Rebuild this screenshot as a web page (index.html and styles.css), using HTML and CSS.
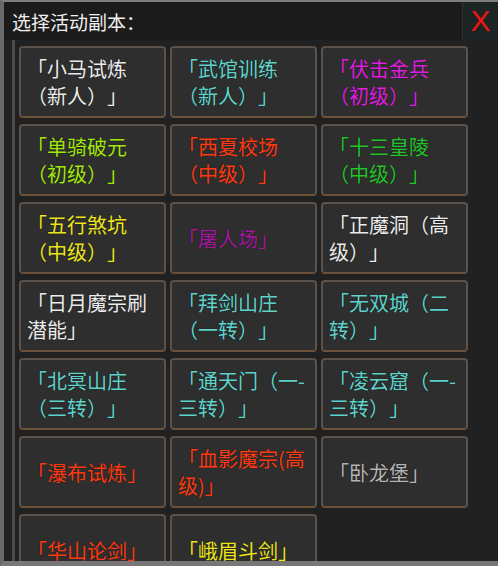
FILE: index.html
```html
<!DOCTYPE html>
<html lang="zh-CN">
<head>
    <meta charset="UTF-8">
    <title>选择活动副本</title>
    <link rel="stylesheet" href="styles.css">
</head>
<body>
    <div class="panel">
        <!-- Header -->
        <div class="panel-header">
            <span class="panel-title">选择活动副本：</span>
            <button class="close-btn">X</button>
        </div>

        <!-- Instance list -->
        <div class="instance-list">
            <div class="instance white">「小马试炼（新人）」</div>
            <div class="instance cyan">「武馆训练（新人）」</div>
            <div class="instance magenta">「伏击金兵（初级）」</div>

            <div class="instance lime">「单骑破元（初级）」</div>
            <div class="instance red">「西夏校场（中级）」</div>
            <div class="instance green">「十三皇陵（中级）」</div>

            <div class="instance yellow">「五行煞坑（中级）」</div>
            <div class="instance purple">「屠人场」</div>
            <div class="instance white">「正魔洞（高级）」</div>

            <div class="instance white">「日月魔宗刷潜能」</div>
            <div class="instance cyan">「拜剑山庄（一转）」</div>
            <div class="instance cyan">「无双城（二转）」</div>

            <div class="instance cyan">「北冥山庄（三转）」</div>
            <div class="instance cyan">「通天门（一-三转）」</div>
            <div class="instance cyan">「凌云窟（一-三转）」</div>

            <div class="instance red">「瀑布试炼」</div>
            <div class="instance red">「血影魔宗(高级)」</div>
            <div class="instance grey">「卧龙堡」</div>

            <div class="instance red">「华山论剑」</div>
            <div class="instance yellow">「峨眉斗剑」</div>
        </div>
    </div>
</body>
</html>
```

FILE: styles.css
```css
body {
    margin: 0;
    padding: 0;
    background-color: #1e1e1e;
    font-family: 'Noto Sans CJK SC', 'Noto Sans', sans-serif;
    text-spacing-trim: space-all;
}

.panel {
    width: 498px;
    height: 566px;
    box-sizing: border-box;
    background-color: #212121;
    border-top: 2px solid #7d7d7d;
    border-left: 4px solid #6a6a6a;
    border-bottom: 5px solid #777;
    display: flex;
    flex-direction: column;
    overflow: hidden;
}

.panel-header {
    height: 38px;
    flex-shrink: 0;
    display: flex;
    align-items: center;
    justify-content: space-between;
    background-color: #1b1b1b;
}

.panel-title {
    color: #f0f0f0;
    font-size: 19px;
    padding-left: 8px;
}

.close-btn {
    width: 36px;
    height: 40px;
    margin-top: -2px;
    align-self: flex-start;
    background-color: #1c2523;
    border: none;
    border-left: 1px solid #2c3230;
    color: #ee1414;
    font-family: 'Liberation Sans', Arial, sans-serif;
    font-size: 30px;
    padding: 2px 0 0;
    cursor: pointer;
}

.instance-list {
    flex: 1;
    margin-left: 8px;
    border-left: 3px solid #4a4a4a;
    padding: 6px 0 0 4px;
    display: grid;
    grid-template-columns: repeat(3, 147px);
    grid-auto-rows: 72px;
    column-gap: 4px;
    row-gap: 6px;
    overflow: hidden;
}

.instance {
    box-sizing: border-box;
    display: flex;
    align-items: center;
    padding: 0 6px;
    background-color: #2e2e2e;
    border: 2px solid #5a524b;
    border-bottom-color: #6b513a;
    border-radius: 4px;
    font-size: 20px;
    line-height: 27px;
    text-shadow: 0 0 1px rgba(0, 0, 0, 0.6);
}

.white { color: #ececec; }
.cyan { color: #5fd3cb; }
.magenta { color: #e01ee0; }
.lime { color: #a2e80a; }
.red { color: #ff3a12; }
.green { color: #22c42a; }
.yellow { color: #ece61a; }
.purple { color: #a4189e; }
.grey { color: #b4b4b4; }
```
